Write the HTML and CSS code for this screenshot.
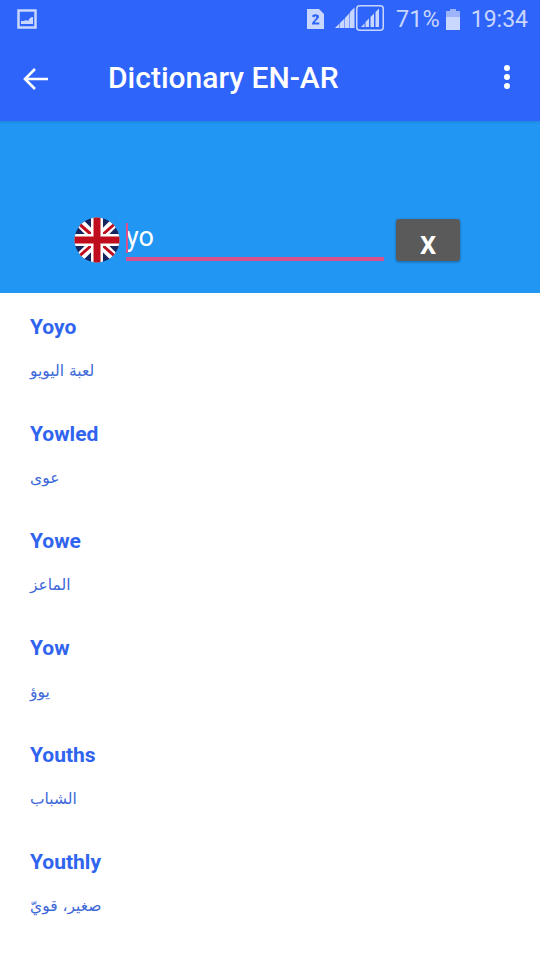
FILE: index.html
```html
<!DOCTYPE html>
<html>
<head>
<meta charset="utf-8">
<title>Dictionary EN-AR</title>
<link rel="stylesheet" href="styles.css">
</head>
<body>
<div class="status">
	<svg class="pic" width="20" height="20" viewBox="0 0 20 20"><rect x="1.500" y="1.500" width="17" height="17" fill="none" stroke="#c9d6fd" stroke-width="2.500"/><path d="M4 15v-3l3 0 2-1 2 1 2-3 2-1 1 0v7z" fill="#c9d6fd"/></svg>
	<div class="status-right">
		<svg class="sim" width="17" height="20" viewBox="0 0 17 20"><path d="M0 0h12l5 5v15H0z" fill="#c9d6fd"/><path d="M5 7.500c0-3 7-3 7 0 0 2.500-4 4-4 6h4.300v2H5c0-3.500 4.300-5 4.300-7.500 0-1-1.800-1-1.800.5z" fill="#2f64fb"/></svg>
		<svg class="signal" width="49" height="28" viewBox="0 0 49 28"><g fill="#c9d6fd"><path d="M0 23l4.500-4.500V23z"/><path d="M5 23v-5l4.500-4.500V23z"/><path d="M10 23V13l4.500-5V23z"/><path d="M15 23V7l4.500-4.500V23z"/></g><rect x="21.750" y="0.750" width="26.500" height="24.500" rx="3" fill="none" stroke="#c9d6fd" stroke-width="1.500"/><g fill="#c9d6fd"><path d="M26 22l3.500-3.500V22z"/><path d="M30.500 22v-5l3.500-3.500V22z"/><path d="M35.500 22V12l3.500-3.500V22z"/><path d="M40.500 22V7l3.500-3.500V22z"/></g></svg>
		<span class="pct">71%</span>
		<svg class="batt" width="14" height="21" viewBox="0 0 14 21"><path d="M4 0h6v2h4v6H0V2h4z" fill="#9db3fc"/><path d="M0 8h14v13H0z" fill="#c9d6fd"/></svg>
		<span class="time">19:34</span>
	</div>
</div>
<div class="bar">
	<svg class="back" width="26" height="24" viewBox="0 0 26 24"><path d="M12 2L2 12l10 10M2 12h23" fill="none" stroke="#fff" stroke-width="2.600"/></svg>
	<div class="title">Dictionary EN-AR</div>
	<div class="dots"><i></i><i></i><i></i></div>
</div>
<div class="search">
	<svg class="flag" width="46" height="46" viewBox="0 0 46 46">
		<defs><clipPath id="c"><circle cx="23" cy="23" r="22.500"/></clipPath></defs>
		<g clip-path="url(#c)">
			<rect width="46" height="46" fill="#16245f"/>
			<path d="M0 0L46 46M46 0L0 46" stroke="#fff" stroke-width="9"/>
			<path d="M3 5L19 19M44 4L27 19M2 42L19 27M44 42L27 27" stroke="#c00d1e" stroke-width="3"/>
			<path d="M23 0V46M0 23H46" stroke="#fff" stroke-width="12"/>
			<path d="M23 0V46M0 23H46" stroke="#c00d1e" stroke-width="7"/>
		</g>
	</svg>
	<div class="field"><span class="caret"></span>yo</div>
	<div class="clear">x</div>
</div>
<div class="list">
	<div class="item"><div class="word">Yoyo</div><div class="mean" dir="rtl">لعبة اليويو</div></div>
	<div class="item"><div class="word">Yowled</div><div class="mean" dir="rtl">عوى</div></div>
	<div class="item"><div class="word">Yowe</div><div class="mean" dir="rtl">الماعز</div></div>
	<div class="item"><div class="word">Yow</div><div class="mean" dir="rtl">يوؤ</div></div>
	<div class="item"><div class="word">Youths</div><div class="mean" dir="rtl">الشباب</div></div>
	<div class="item"><div class="word">Youthly</div><div class="mean" dir="rtl">صغير، قويّ</div></div>
</div>
</body>
</html>
```
FILE: styles.css
```css
html, body {
	margin: 0;
	padding: 0;
}
body {
	width: 540px;
	height: 960px;
	overflow: hidden;
	background: #fff;
	font-family: Roboto, "Noto Sans", "DejaVu Sans", sans-serif;
}
.status {
	height: 38px;
	background: #2f64fb;
	display: flex;
	align-items: center;
	justify-content: space-between;
	padding: 0 12px 0 17px;
	color: #c9d6fd;
}
.status-right {
	display: flex;
	align-items: center;
}
.sim { margin-right: 11px; }
.signal { margin-right: 12px; }
.pct {
	font-size: 23.500px;
	margin-right: 6px;
}
.batt { margin-right: 11px; }
.time { font-size: 23px; }
.bar {
	height: 83px;
	background: #2f64fb;
	display: flex;
	align-items: center;
	padding: 0 0 2px 23px;
	box-sizing: border-box;
}
.title {
	color: #fff;
	font-size: 30px;
	font-weight: 500;
	margin-left: 59px;
	margin-top: -2px;
}
.dots {
	margin-left: auto;
	margin-right: 30px;
	margin-top: -4px;
	display: flex;
	flex-direction: column;
	gap: 3px;
}
.dots i {
	display: block;
	width: 6px;
	height: 6px;
	border-radius: 50%;
	background: #fff;
}
.search {
	height: 172px;
	background: #2196f3;
	display: flex;
	align-items: flex-end;
	padding: 0 0 29px 74px;
	box-sizing: border-box;
	box-shadow: inset 0 3px 3px -2px rgba(0,0,0,.12);
}
.flag { margin-bottom: 1px; }
.field {
	width: 258px;
	height: 40px;
	margin-left: 6px;
	border-bottom: 4px solid #d9528e;
	color: #fff;
	font-size: 27px;
	line-height: 33px;
	position: relative;
	box-sizing: border-box;
	margin-bottom: 3px;
}
.caret {
	position: absolute;
	left: 0;
	top: 2px;
	width: 2px;
	height: 30px;
	background: #d9528e;
}
.clear {
	width: 64px;
	height: 42px;
	margin-left: 12px;
	margin-bottom: 3px;
	background: #5a5a5a;
	border-radius: 3px;
	box-shadow: 0 1px 3px rgba(0,0,0,.35);
	color: #fff;
	font-size: 33px;
	font-weight: 500;
	line-height: 48px;
	text-align: center;
}
.list {
	padding: 20px 30px 0;
}
.item {
	height: 107px;
}
.word {
	color: #2f64ee;
	font-size: 21px;
	font-weight: 700;
	line-height: 28px;
}
.mean {
	color: #3d68d8;
	font-size: 15.500px;
	line-height: 24px;
	margin-top: 18px;
	text-align: right;
	width: max-content;
	font-family: "DejaVu Sans", "Noto Sans", sans-serif;
}
```
